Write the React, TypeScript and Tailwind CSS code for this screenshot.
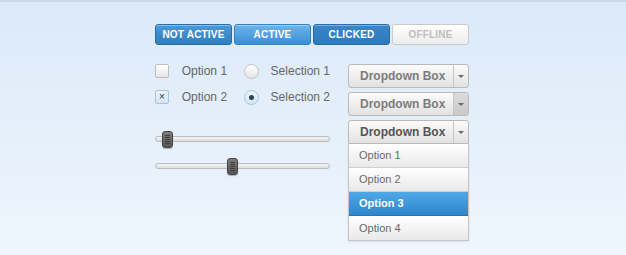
import React from "react";

/* ============================================
   Buttons
============================================ */

function TopButtons() {
  const base =
    "w-[77px] h-[21px] rounded-[3px] border text-[10px] font-bold tracking-[0.2px] flex items-center justify-center shadow-[inset_0_1px_0_rgba(255,255,255,0.35)]";

  return (
    <div className="flex gap-[2px]">
      <button
        className={`${base} border-[#2a6ea8] bg-linear-to-b from-[#4a9ad8] to-[#2f7fc2] text-white`}
      >
        NOT ACTIVE
      </button>
      <button
        className={`${base} border-[#3583c4] bg-linear-to-b from-[#6cb5ec] to-[#3a8ed4] text-white`}
      >
        ACTIVE
      </button>
      <button
        className={`${base} border-[#2a6ea8] bg-linear-to-b from-[#3a86c8] to-[#2c7bbf] text-white`}
      >
        CLICKED
      </button>
      <button
        className={`${base} border-[#c9c9c9] bg-linear-to-b from-[#ffffff] to-[#ececec] text-[#bdbdbd]`}
      >
        OFFLINE
      </button>
    </div>
  );
}

/* ============================================
   Checkboxes + radios
============================================ */

function Checkbox({ checked }: { checked?: boolean }) {
  return (
    <span
      className={`w-[14px] h-[14px] rounded-[2px] border flex items-center justify-center text-[10px] leading-none ${
        checked
          ? "border-[#a9c4dc] bg-linear-to-b from-[#e9f3fc] to-[#d3e5f5] text-[#333]"
          : "border-[#bdbdbd] bg-linear-to-b from-[#ffffff] to-[#e6e6e6]"
      }`}
    >
      {checked ? "×" : ""}
    </span>
  );
}

function Radio({ checked }: { checked?: boolean }) {
  return (
    <span
      className={`w-[15px] h-[15px] rounded-full border flex items-center justify-center ${
        checked
          ? "border-[#a9c4dc] bg-linear-to-b from-[#e9f3fc] to-[#d3e5f5]"
          : "border-[#c4c4c4] bg-linear-to-b from-[#ffffff] to-[#e4e4e4]"
      }`}
    >
      {checked && <span className="w-[5px] h-[5px] rounded-full bg-[#2d4256]" />}
    </span>
  );
}

function ChoiceRow({ n, checked }: { n: number; checked?: boolean }) {
  return (
    <div className="flex items-center h-[16px] text-[12px] text-[#666] whitespace-nowrap">
      <Checkbox checked={checked} />
      <span className="ml-[13px] w-[64px]">Option {n}</span>
      <Radio checked={checked} />
      <span className="ml-[12px]">Selection {n}</span>
    </div>
  );
}

/* ============================================
   Sliders
============================================ */

function Slider({ left }: { left: number }) {
  return (
    <div className="relative h-[6px] w-[175px] rounded-full border border-[#bcbcbc] bg-linear-to-b from-[#f6f6f6] to-[#dcdcdc]">
      <div
        className="absolute top-[-6px] w-[11px] h-[17px] rounded-[3px] border border-[#444] bg-linear-to-b from-[#7d7d7d] to-[#555] flex flex-col items-center justify-center gap-[1px] shadow-[0_1px_1px_rgba(0,0,0,0.25)]"
        style={{ left }}
      >
        <span className="w-[5px] h-px bg-[#3e3e3e]" />
        <span className="w-[5px] h-px bg-[#3e3e3e]" />
        <span className="w-[5px] h-px bg-[#3e3e3e]" />
        <span className="w-[5px] h-px bg-[#3e3e3e]" />
        <span className="w-[5px] h-px bg-[#3e3e3e]" />
      </div>
    </div>
  );
}

/* ============================================
   Dropdowns
============================================ */

function Dropdown({
  hover,
  open,
}: {
  hover?: boolean;
  open?: boolean;
}) {
  return (
    <div
      className={`flex h-[24px] border border-[#bababa] bg-linear-to-b from-[#fbfbfb] to-[#e2e2e2] ${
        open ? "rounded-t-[3px]" : "rounded-[3px]"
      }`}
    >
      <div
        className={`flex-1 flex items-center pl-[11px] text-[12px] font-bold ${
          open ? "text-[#555]" : "text-[#7c7c7c]"
        }`}
      >
        Dropdown Box
      </div>
      <div
        className={`w-[15px] border-l border-[#c4c4c4] flex items-center justify-center ${
          hover ? "bg-linear-to-b from-[#dcdcdc] to-[#c9c9c9]" : ""
        }`}
      >
        <span className="w-0 h-0 border-l-[3px] border-r-[3px] border-t-[3px] border-l-transparent border-r-transparent border-t-[#6a6a6a]" />
      </div>
    </div>
  );
}

function OptionList() {
  const options = ["Option 1", "Option 2", "Option 3", "Option 4"];

  return (
    <div className="border border-t-0 border-[#c4c4c4] shadow-[0_1px_2px_rgba(0,0,0,0.08)]">
      {options.map((o, i) => (
        <div
          key={o}
          className={`h-[24px] flex items-center pl-[10px] text-[11px] ${
            i === 2
              ? "bg-linear-to-b from-[#4ea8e8] to-[#2f86cc] text-white font-bold border-b border-[#2a72b0]"
              : "bg-linear-to-b from-[#ffffff] to-[#e9e9e9] text-[#6a6a6a] border-b border-[#cfcfcf] last:border-b-0"
          }`}
        >
          {o}
        </div>
      ))}
    </div>
  );
}

/* ============================================
   App Root
============================================ */

export default function App() {
  return (
    <div
      className="h-[255px] w-full overflow-hidden bg-linear-to-b from-[#dbe9f8] to-[#eff6fd] border-t-2 border-[#c6d8ea] pt-[22px] pl-[155px]"
      style={{ fontFamily: '"Liberation Sans", Arial, sans-serif' }}
    >
      <TopButtons />

      <div className="flex mt-[19px]">
        <div className="w-[175px]">
          <div className="flex flex-col gap-[10px] mt-[-1px]">
            <ChoiceRow n={1} />
            <ChoiceRow n={2} checked />
          </div>
          <div className="mt-[31px] flex flex-col gap-[21px]">
            <Slider left={6} />
            <Slider left={71} />
          </div>
        </div>

        <div className="ml-[18px] w-[121px] flex flex-col gap-[4px]">
          <Dropdown />
          <Dropdown hover />
          <div>
            <Dropdown open />
            <OptionList />
          </div>
        </div>
      </div>
    </div>
  );
}
